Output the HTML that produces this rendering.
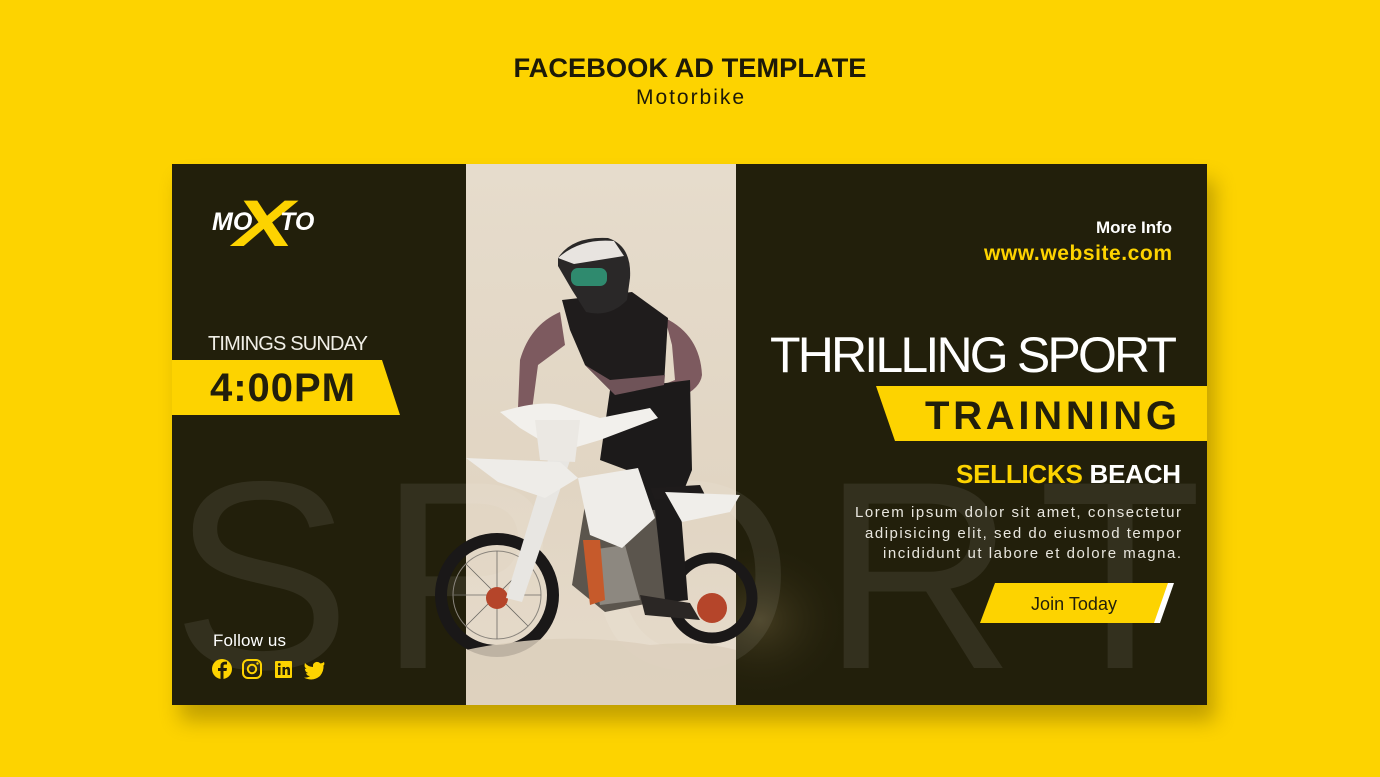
<!DOCTYPE html>
<html><head><meta charset="utf-8"><style>
html,body{margin:0;padding:0;background:#fdd300;}
svg{display:block}
text{font-family:"Liberation Sans",sans-serif}
</style></head><body>
<svg width="1380" height="777" viewBox="0 0 1380 777" xmlns="http://www.w3.org/2000/svg">
<defs>
<linearGradient id="ph" x1="0" y1="0" x2="0" y2="1">
<stop offset="0" stop-color="#e6dccc"/><stop offset="0.6" stop-color="#e1d5c3"/><stop offset="1" stop-color="#e6dbcb"/>
</linearGradient>
<radialGradient id="glow" cx="0.5" cy="0.5" r="0.5">
<stop offset="0" stop-color="#6d5f3a" stop-opacity="0.45"/><stop offset="1" stop-color="#221f0b" stop-opacity="0"/>
</radialGradient>
<filter id="sh" x="-10%" y="-10%" width="120%" height="130%"><feGaussianBlur stdDeviation="10"/></filter>
</defs>
<rect width="1380" height="777" fill="#fdd300"/>
<text x="690" y="77" text-anchor="middle" font-size="27" font-weight="bold" fill="#1d1a08" textLength="353" lengthAdjust="spacingAndGlyphs">FACEBOOK AD TEMPLATE</text>
<text x="690" y="104" text-anchor="middle" font-size="21" fill="#1d1a08" textLength="108">Motorbike</text>

<rect x="180" y="180" width="1035" height="541" fill="#7a6400" opacity="0.45" filter="url(#sh)"/>
<rect x="172" y="164" width="1035" height="541" fill="#221f0b"/>
<ellipse cx="760" cy="620" rx="90" ry="80" fill="url(#glow)"/>
<rect x="466" y="164" width="270" height="541" fill="url(#ph)"/>

<!-- SPORT watermark -->
<text x="172" y="668" font-size="268" fill="#ffffff" fill-opacity="0.08" textLength="1030" lengthAdjust="spacing">SPORT</text>

<!-- rider & bike -->
<g>
<!-- rear wheel -->
<circle cx="712" cy="598" r="40" fill="none" stroke="#1a1818" stroke-width="11"/>
<circle cx="712" cy="608" r="15" fill="#b5452a"/>
<!-- right arm -->
<path d="M665 318 Q700 335 702 375 Q700 392 668 402 L648 405 L645 392 L675 380 L672 345 Z" fill="#7d5a5f"/>
<!-- left arm -->
<path d="M560 312 Q530 325 520 360 L518 408 L532 410 L538 365 L565 345 Z" fill="#7d5a5f"/>
<!-- legs -->
<path d="M610 390 L690 380 L692 470 L680 500 L688 600 L655 604 L650 520 L640 475 L600 460 Z" fill="#1c1a1a"/>
<!-- torso vest -->
<path d="M562 300 L632 292 L668 318 L664 385 L615 395 L585 365 L570 330 Z" fill="#1f1c1c"/>
<path d="M585 365 L615 395 L664 385 L665 375 L610 380 Z" fill="#6f5358"/>
<!-- helmet -->
<path d="M558 258 Q572 236 608 238 Q632 246 630 278 L627 300 Q610 318 586 312 L572 290 L558 266 Z" fill="#2a2828"/>
<path d="M558 258 Q580 238 614 241 L624 256 L574 264 Z" fill="#e8e4e0"/>
<rect x="571" y="268" width="36" height="18" rx="7" fill="#2f8a6e"/>
<!-- front wheel -->
<circle cx="497" cy="595" r="56" fill="none" stroke="#1a1818" stroke-width="12"/>
<circle cx="497" cy="595" r="44" fill="none" stroke="#8a857d" stroke-width="1"/>
<g stroke="#6d6a65" stroke-width="0.8"><line x1="497" y1="551" x2="497" y2="639"/><line x1="453" y1="595" x2="541" y2="595"/><line x1="466" y1="564" x2="528" y2="626"/><line x1="466" y1="626" x2="528" y2="564"/></g>
<circle cx="497" cy="598" r="11" fill="#b5452a"/>
<!-- engine -->
<path d="M585 505 L655 510 L665 600 L605 612 L572 585 Z" fill="#5b554d"/>
<path d="M590 550 L625 545 L640 600 L600 605 Z" fill="#8d8880"/>
<path d="M583 540 L600 540 L605 600 L590 605 Z" fill="#c65a2b"/>
<path d="M640 595 L690 603 L700 620 L645 615 Z" fill="#2b2725"/>
<!-- forks -->
<path d="M560 420 L582 425 L522 602 L506 598 Z" fill="#e8e6e2"/>
<!-- handlebar / number plate -->
<path d="M500 412 Q540 400 560 405 L600 418 L650 408 L658 418 L600 440 L560 452 L520 428 Z" fill="#f2f0ec"/>
<path d="M535 420 L580 420 L575 462 L540 460 Z" fill="#ebe8e3"/>
<!-- front fender -->
<path d="M466 458 L560 462 L578 478 L545 498 L498 482 Z" fill="#eeece8"/>
<!-- shroud -->
<path d="M578 478 L638 468 L655 518 L622 548 L590 535 Z" fill="#efede9"/>
<!-- seat & rear fender -->
<path d="M650 488 L700 485 L705 495 L655 500 Z" fill="#1e1b1b"/>
<path d="M665 492 L740 495 L730 512 L682 522 Z" fill="#f0eeea"/>
<!-- sand -->
<path d="M466 650 Q560 630 650 645 Q700 640 736 650 L736 705 L466 705 Z" fill="#dccfbc" opacity="0.85"/>
</g>

<!-- logo -->
<text x="212" y="230" font-size="25" font-weight="bold" font-style="italic" fill="#fff">MO</text>
<text x="234" y="246" font-size="66" font-weight="bold" font-style="italic" fill="#fdd300" textLength="60" lengthAdjust="spacingAndGlyphs">X</text>
<text x="280" y="230" font-size="25" font-weight="bold" font-style="italic" fill="#fff">TO</text>

<text x="208" y="350" font-size="20" fill="#f0eee6" textLength="160">TIMINGS SUNDAY</text>
<polygon points="172,360 382,360 400,415 172,415" fill="#fdd300"/>
<text x="210" y="401" font-size="40" font-weight="bold" fill="#221f0b" textLength="145">4:00PM</text>

<text x="213" y="646" font-size="17" fill="#fff" textLength="73">Follow us</text>
<!-- icons -->
<g fill="#fdd300">
<circle cx="222" cy="669" r="10"/>
<path d="M223.5 679 L223.5 671 L226.5 671 L227 668 L223.5 668 L223.5 666 Q223.5 664.5 225 664.5 L227 664.5 L227 661.8 Q221 661 220.5 665.5 L220.5 668 L218 668 L218 671 L220.5 671 L220.5 679 Z" fill="#221f0b"/>
<rect x="243" y="660" width="18" height="18" rx="5" fill="none" stroke="#fdd300" stroke-width="2"/>
<circle cx="252" cy="669" r="4.2" fill="none" stroke="#fdd300" stroke-width="2"/>
<circle cx="257.5" cy="663.5" r="1.2"/>
<rect x="275" y="661" width="17" height="17" rx="1"/>
<rect x="278" y="667" width="2.5" height="8" fill="#221f0b"/>
<circle cx="279.3" cy="664.5" r="1.4" fill="#221f0b"/>
<path d="M282.5 667 L285 667 L285 668.3 Q286.5 666.5 288.5 667 Q290 667.5 290 670 L290 675 L287.5 675 L287.5 670.5 Q287.5 669 286.3 669 Q285 669 285 670.8 L285 675 L282.5 675 Z" fill="#221f0b"/>
<path d="M324 662 Q322 663.5 320.5 663.5 Q318.5 661.5 316 662 Q312.5 663 313 667 Q308 666.8 305 663 Q303.5 666.5 306.5 669 Q305.5 669 304.8 668.5 Q305 672 308 673 Q307 673.4 306 673.2 Q307 676 310 676 Q307.5 678 304 677.6 Q313 682 320 676 Q324 671 323.5 665.5 Q325 664.5 324 662 Z"/>
</g>

<text x="1172" y="233" text-anchor="end" font-size="17" font-weight="bold" fill="#fff" textLength="76">More Info</text>
<text x="1172" y="260" text-anchor="end" font-size="21" font-weight="bold" fill="#fdd300" textLength="188">www.website.com</text>
<text x="1177" y="372" text-anchor="end" font-size="50" fill="#fff" textLength="407" lengthAdjust="spacing">THRILLING SPORT</text>
<polygon points="876,386 1207,386 1207,441 895,441" fill="#fdd300"/>
<text x="1177" y="429" text-anchor="end" font-size="40" font-weight="bold" fill="#221f0b" textLength="252">TRAINNING</text>
<text x="1181" y="483" text-anchor="end" font-size="26" font-weight="bold" textLength="225"><tspan fill="#fdd300">SELLICKS </tspan><tspan fill="#fff">BEACH</tspan></text>
<g font-size="15" fill="#e8e6de" text-anchor="end">
<text x="1181" y="517" textLength="326">Lorem ipsum dolor sit amet, consectetur</text>
<text x="1181" y="538" textLength="316">adipisicing elit, sed do eiusmod tempor</text>
<text x="1181" y="558" textLength="298">incididunt ut labore et dolore magna.</text>
</g>
<polygon points="1162,583 1174,583 1160,623 1148,623" fill="#fff"/>
<polygon points="995,583 1168,583 1154,623 980,623" fill="#fdd300"/>
<text x="1074" y="610" text-anchor="middle" font-size="18" fill="#221f0b" textLength="86">Join Today</text>
</svg>
</body></html>
